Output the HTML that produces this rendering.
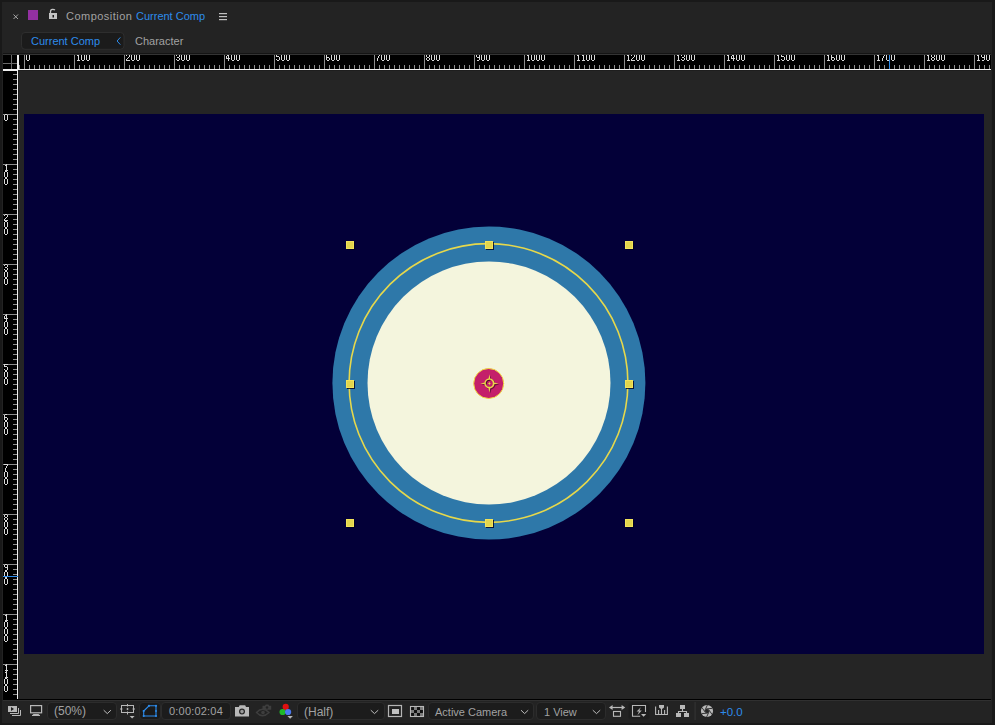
<!DOCTYPE html>
<html><head><meta charset="utf-8">
<style>
*{margin:0;padding:0;box-sizing:border-box}
html,body{width:995px;height:725px;overflow:hidden;background:#191919}
body{position:relative;font-family:"Liberation Sans",sans-serif}
.a{position:absolute}
.t{position:absolute;white-space:nowrap;font-size:11px;line-height:11px}
.g{color:#a2a2a2}
.b{color:#2d8ceb}
.dd{position:absolute;top:702px;height:18px;background:#1c1c1c;border:1px solid #2c2c2c;border-radius:4px}
svg{position:absolute;left:0;top:0;overflow:visible}
</style></head><body>
<div class="a" style="left:2px;top:2px;width:990px;height:721px;background:#232323"></div>
<!-- title row -->
<svg width="995" height="725" viewBox="0 0 995 725" shape-rendering="crispEdges">
  <!-- purple swatch -->
  <rect x="28" y="10" width="10" height="10" fill="#9330a2"/>
  <!-- tab box -->
  <rect x="21.5" y="32.5" width="102.5" height="16.8" rx="3.5" fill="#1b1b1b" stroke="#2e2e2e" stroke-width="1" shape-rendering="geometricPrecision"/>
  <!-- ruler top lines -->
  <rect x="3" y="53" width="988" height="1" fill="#141414"/>
  <rect x="3" y="54" width="988" height="1" fill="#343434"/>
  <!-- horizontal ruler bg -->
  <rect x="3" y="55" width="988" height="14" fill="#000"/>
  <!-- vertical ruler bg -->
  <rect x="3" y="69" width="14" height="630" fill="#000"/>
  <!-- viewer bg -->
  <rect x="18" y="70" width="973" height="629" fill="#252525"/>
  <rect x="18" y="70" width="973" height="1" fill="#1e1e1e"/>
  <rect x="18" y="70" width="1" height="629" fill="#1e1e1e"/>
  <!-- comp -->
  <rect x="24" y="114" width="960" height="540" fill="#030038"/>
  <!-- ticks -->
  <path fill="#8e8e8e" d="M19 65h1v4h-1zM24 55h1v14h-1zM29 65h1v4h-1zM34 65h1v4h-1zM39 65h1v4h-1zM44 65h1v4h-1zM49 65h1v4h-1zM54 65h1v4h-1zM59 65h1v4h-1zM64 65h1v4h-1zM69 65h1v4h-1zM74 55h1v14h-1zM79 65h1v4h-1zM84 65h1v4h-1zM89 65h1v4h-1zM94 65h1v4h-1zM99 65h1v4h-1zM104 65h1v4h-1zM109 65h1v4h-1zM114 65h1v4h-1zM119 65h1v4h-1zM124 55h1v14h-1zM129 65h1v4h-1zM134 65h1v4h-1zM139 65h1v4h-1zM144 65h1v4h-1zM149 65h1v4h-1zM154 65h1v4h-1zM159 65h1v4h-1zM164 65h1v4h-1zM169 65h1v4h-1zM174 55h1v14h-1zM179 65h1v4h-1zM184 65h1v4h-1zM189 65h1v4h-1zM194 65h1v4h-1zM199 65h1v4h-1zM204 65h1v4h-1zM209 65h1v4h-1zM214 65h1v4h-1zM219 65h1v4h-1zM224 55h1v14h-1zM229 65h1v4h-1zM234 65h1v4h-1zM239 65h1v4h-1zM244 65h1v4h-1zM249 65h1v4h-1zM254 65h1v4h-1zM259 65h1v4h-1zM264 65h1v4h-1zM269 65h1v4h-1zM274 55h1v14h-1zM279 65h1v4h-1zM284 65h1v4h-1zM289 65h1v4h-1zM294 65h1v4h-1zM299 65h1v4h-1zM304 65h1v4h-1zM309 65h1v4h-1zM314 65h1v4h-1zM319 65h1v4h-1zM324 55h1v14h-1zM329 65h1v4h-1zM334 65h1v4h-1zM339 65h1v4h-1zM344 65h1v4h-1zM349 65h1v4h-1zM354 65h1v4h-1zM359 65h1v4h-1zM364 65h1v4h-1zM369 65h1v4h-1zM374 55h1v14h-1zM379 65h1v4h-1zM384 65h1v4h-1zM389 65h1v4h-1zM394 65h1v4h-1zM399 65h1v4h-1zM404 65h1v4h-1zM409 65h1v4h-1zM414 65h1v4h-1zM419 65h1v4h-1zM424 55h1v14h-1zM429 65h1v4h-1zM434 65h1v4h-1zM439 65h1v4h-1zM444 65h1v4h-1zM449 65h1v4h-1zM454 65h1v4h-1zM459 65h1v4h-1zM464 65h1v4h-1zM469 65h1v4h-1zM474 55h1v14h-1zM479 65h1v4h-1zM484 65h1v4h-1zM489 65h1v4h-1zM494 65h1v4h-1zM499 65h1v4h-1zM504 65h1v4h-1zM509 65h1v4h-1zM514 65h1v4h-1zM519 65h1v4h-1zM524 55h1v14h-1zM529 65h1v4h-1zM534 65h1v4h-1zM539 65h1v4h-1zM544 65h1v4h-1zM549 65h1v4h-1zM554 65h1v4h-1zM559 65h1v4h-1zM564 65h1v4h-1zM569 65h1v4h-1zM574 55h1v14h-1zM579 65h1v4h-1zM584 65h1v4h-1zM589 65h1v4h-1zM594 65h1v4h-1zM599 65h1v4h-1zM604 65h1v4h-1zM609 65h1v4h-1zM614 65h1v4h-1zM619 65h1v4h-1zM624 55h1v14h-1zM629 65h1v4h-1zM634 65h1v4h-1zM639 65h1v4h-1zM644 65h1v4h-1zM649 65h1v4h-1zM654 65h1v4h-1zM659 65h1v4h-1zM664 65h1v4h-1zM669 65h1v4h-1zM674 55h1v14h-1zM679 65h1v4h-1zM684 65h1v4h-1zM689 65h1v4h-1zM694 65h1v4h-1zM699 65h1v4h-1zM704 65h1v4h-1zM709 65h1v4h-1zM714 65h1v4h-1zM719 65h1v4h-1zM724 55h1v14h-1zM729 65h1v4h-1zM734 65h1v4h-1zM739 65h1v4h-1zM744 65h1v4h-1zM749 65h1v4h-1zM754 65h1v4h-1zM759 65h1v4h-1zM764 65h1v4h-1zM769 65h1v4h-1zM774 55h1v14h-1zM779 65h1v4h-1zM784 65h1v4h-1zM789 65h1v4h-1zM794 65h1v4h-1zM799 65h1v4h-1zM804 65h1v4h-1zM809 65h1v4h-1zM814 65h1v4h-1zM819 65h1v4h-1zM824 55h1v14h-1zM829 65h1v4h-1zM834 65h1v4h-1zM839 65h1v4h-1zM844 65h1v4h-1zM849 65h1v4h-1zM854 65h1v4h-1zM859 65h1v4h-1zM864 65h1v4h-1zM869 65h1v4h-1zM874 55h1v14h-1zM879 65h1v4h-1zM884 65h1v4h-1zM889 65h1v4h-1zM894 65h1v4h-1zM899 65h1v4h-1zM904 65h1v4h-1zM909 65h1v4h-1zM914 65h1v4h-1zM919 65h1v4h-1zM924 55h1v14h-1zM929 65h1v4h-1zM934 65h1v4h-1zM939 65h1v4h-1zM944 65h1v4h-1zM949 65h1v4h-1zM954 65h1v4h-1zM959 65h1v4h-1zM964 65h1v4h-1zM969 65h1v4h-1zM974 55h1v14h-1zM979 65h1v4h-1zM984 65h1v4h-1zM989 65h1v4h-1z"/>
  <path fill="#8e8e8e" d="M13 74h4v1h-4zM13 79h4v1h-4zM13 84h4v1h-4zM13 89h4v1h-4zM13 94h4v1h-4zM13 99h4v1h-4zM13 104h4v1h-4zM13 109h4v1h-4zM3 114h14v1h-14zM13 119h4v1h-4zM13 124h4v1h-4zM13 129h4v1h-4zM13 134h4v1h-4zM13 139h4v1h-4zM13 144h4v1h-4zM13 149h4v1h-4zM13 154h4v1h-4zM13 159h4v1h-4zM3 164h14v1h-14zM13 169h4v1h-4zM13 174h4v1h-4zM13 179h4v1h-4zM13 184h4v1h-4zM13 189h4v1h-4zM13 194h4v1h-4zM13 199h4v1h-4zM13 204h4v1h-4zM13 209h4v1h-4zM3 214h14v1h-14zM13 219h4v1h-4zM13 224h4v1h-4zM13 229h4v1h-4zM13 234h4v1h-4zM13 239h4v1h-4zM13 244h4v1h-4zM13 249h4v1h-4zM13 254h4v1h-4zM13 259h4v1h-4zM3 264h14v1h-14zM13 269h4v1h-4zM13 274h4v1h-4zM13 279h4v1h-4zM13 284h4v1h-4zM13 289h4v1h-4zM13 294h4v1h-4zM13 299h4v1h-4zM13 304h4v1h-4zM13 309h4v1h-4zM3 314h14v1h-14zM13 319h4v1h-4zM13 324h4v1h-4zM13 329h4v1h-4zM13 334h4v1h-4zM13 339h4v1h-4zM13 344h4v1h-4zM13 349h4v1h-4zM13 354h4v1h-4zM13 359h4v1h-4zM3 364h14v1h-14zM13 369h4v1h-4zM13 374h4v1h-4zM13 379h4v1h-4zM13 384h4v1h-4zM13 389h4v1h-4zM13 394h4v1h-4zM13 399h4v1h-4zM13 404h4v1h-4zM13 409h4v1h-4zM3 414h14v1h-14zM13 419h4v1h-4zM13 424h4v1h-4zM13 429h4v1h-4zM13 434h4v1h-4zM13 439h4v1h-4zM13 444h4v1h-4zM13 449h4v1h-4zM13 454h4v1h-4zM13 459h4v1h-4zM3 464h14v1h-14zM13 469h4v1h-4zM13 474h4v1h-4zM13 479h4v1h-4zM13 484h4v1h-4zM13 489h4v1h-4zM13 494h4v1h-4zM13 499h4v1h-4zM13 504h4v1h-4zM13 509h4v1h-4zM3 514h14v1h-14zM13 519h4v1h-4zM13 524h4v1h-4zM13 529h4v1h-4zM13 534h4v1h-4zM13 539h4v1h-4zM13 544h4v1h-4zM13 549h4v1h-4zM13 554h4v1h-4zM13 559h4v1h-4zM3 564h14v1h-14zM13 569h4v1h-4zM13 574h4v1h-4zM13 579h4v1h-4zM13 584h4v1h-4zM13 589h4v1h-4zM13 594h4v1h-4zM13 599h4v1h-4zM13 604h4v1h-4zM13 609h4v1h-4zM3 614h14v1h-14zM13 619h4v1h-4zM13 624h4v1h-4zM13 629h4v1h-4zM13 634h4v1h-4zM13 639h4v1h-4zM13 644h4v1h-4zM13 649h4v1h-4zM13 654h4v1h-4zM13 659h4v1h-4zM3 664h14v1h-14zM13 669h4v1h-4zM13 674h4v1h-4zM13 679h4v1h-4zM13 684h4v1h-4zM13 689h4v1h-4zM13 694h4v1h-4z"/>
  <path fill="#d8d8d8" d="M26 55h1v1h-1zM29 55h1v1h-1zM26 56h1v1h-1zM29 56h1v1h-1zM26 57h1v1h-1zM29 57h1v1h-1zM26 58h1v1h-1zM29 58h1v1h-1zM26 59h1v1h-1zM29 59h1v1h-1zM27 60h1v1h-1zM28 60h1v1h-1zM77 55h1v1h-1zM78 55h1v1h-1zM78 56h1v1h-1zM78 57h1v1h-1zM78 58h1v1h-1zM78 59h1v1h-1zM77 60h1v1h-1zM78 60h1v1h-1zM79 60h1v1h-1zM81 55h1v1h-1zM84 55h1v1h-1zM81 56h1v1h-1zM84 56h1v1h-1zM81 57h1v1h-1zM84 57h1v1h-1zM81 58h1v1h-1zM84 58h1v1h-1zM81 59h1v1h-1zM84 59h1v1h-1zM82 60h1v1h-1zM83 60h1v1h-1zM86 55h1v1h-1zM89 55h1v1h-1zM86 56h1v1h-1zM89 56h1v1h-1zM86 57h1v1h-1zM89 57h1v1h-1zM86 58h1v1h-1zM89 58h1v1h-1zM86 59h1v1h-1zM89 59h1v1h-1zM87 60h1v1h-1zM88 60h1v1h-1zM126 55h1v1h-1zM129 55h1v1h-1zM129 56h1v1h-1zM128 57h1v1h-1zM127 58h1v1h-1zM126 59h1v1h-1zM126 60h1v1h-1zM127 60h1v1h-1zM128 60h1v1h-1zM129 60h1v1h-1zM131 55h1v1h-1zM134 55h1v1h-1zM131 56h1v1h-1zM134 56h1v1h-1zM131 57h1v1h-1zM134 57h1v1h-1zM131 58h1v1h-1zM134 58h1v1h-1zM131 59h1v1h-1zM134 59h1v1h-1zM132 60h1v1h-1zM133 60h1v1h-1zM136 55h1v1h-1zM139 55h1v1h-1zM136 56h1v1h-1zM139 56h1v1h-1zM136 57h1v1h-1zM139 57h1v1h-1zM136 58h1v1h-1zM139 58h1v1h-1zM136 59h1v1h-1zM139 59h1v1h-1zM137 60h1v1h-1zM138 60h1v1h-1zM176 55h1v1h-1zM179 55h1v1h-1zM179 56h1v1h-1zM177 57h1v1h-1zM178 57h1v1h-1zM179 58h1v1h-1zM176 59h1v1h-1zM179 59h1v1h-1zM177 60h1v1h-1zM178 60h1v1h-1zM181 55h1v1h-1zM184 55h1v1h-1zM181 56h1v1h-1zM184 56h1v1h-1zM181 57h1v1h-1zM184 57h1v1h-1zM181 58h1v1h-1zM184 58h1v1h-1zM181 59h1v1h-1zM184 59h1v1h-1zM182 60h1v1h-1zM183 60h1v1h-1zM186 55h1v1h-1zM189 55h1v1h-1zM186 56h1v1h-1zM189 56h1v1h-1zM186 57h1v1h-1zM189 57h1v1h-1zM186 58h1v1h-1zM189 58h1v1h-1zM186 59h1v1h-1zM189 59h1v1h-1zM187 60h1v1h-1zM188 60h1v1h-1zM227 55h1v1h-1zM228 55h1v1h-1zM226 56h1v1h-1zM228 56h1v1h-1zM226 57h1v1h-1zM228 57h1v1h-1zM226 58h1v1h-1zM227 58h1v1h-1zM228 58h1v1h-1zM229 58h1v1h-1zM228 59h1v1h-1zM228 60h1v1h-1zM231 55h1v1h-1zM234 55h1v1h-1zM231 56h1v1h-1zM234 56h1v1h-1zM231 57h1v1h-1zM234 57h1v1h-1zM231 58h1v1h-1zM234 58h1v1h-1zM231 59h1v1h-1zM234 59h1v1h-1zM232 60h1v1h-1zM233 60h1v1h-1zM236 55h1v1h-1zM239 55h1v1h-1zM236 56h1v1h-1zM239 56h1v1h-1zM236 57h1v1h-1zM239 57h1v1h-1zM236 58h1v1h-1zM239 58h1v1h-1zM236 59h1v1h-1zM239 59h1v1h-1zM237 60h1v1h-1zM238 60h1v1h-1zM276 55h1v1h-1zM276 56h1v1h-1zM277 56h1v1h-1zM278 56h1v1h-1zM279 57h1v1h-1zM279 58h1v1h-1zM276 59h1v1h-1zM279 59h1v1h-1zM277 60h1v1h-1zM278 60h1v1h-1zM281 55h1v1h-1zM284 55h1v1h-1zM281 56h1v1h-1zM284 56h1v1h-1zM281 57h1v1h-1zM284 57h1v1h-1zM281 58h1v1h-1zM284 58h1v1h-1zM281 59h1v1h-1zM284 59h1v1h-1zM282 60h1v1h-1zM283 60h1v1h-1zM286 55h1v1h-1zM289 55h1v1h-1zM286 56h1v1h-1zM289 56h1v1h-1zM286 57h1v1h-1zM289 57h1v1h-1zM286 58h1v1h-1zM289 58h1v1h-1zM286 59h1v1h-1zM289 59h1v1h-1zM287 60h1v1h-1zM288 60h1v1h-1zM326 55h1v1h-1zM326 56h1v1h-1zM326 57h1v1h-1zM327 57h1v1h-1zM328 57h1v1h-1zM326 58h1v1h-1zM329 58h1v1h-1zM326 59h1v1h-1zM329 59h1v1h-1zM327 60h1v1h-1zM328 60h1v1h-1zM331 55h1v1h-1zM334 55h1v1h-1zM331 56h1v1h-1zM334 56h1v1h-1zM331 57h1v1h-1zM334 57h1v1h-1zM331 58h1v1h-1zM334 58h1v1h-1zM331 59h1v1h-1zM334 59h1v1h-1zM332 60h1v1h-1zM333 60h1v1h-1zM336 55h1v1h-1zM339 55h1v1h-1zM336 56h1v1h-1zM339 56h1v1h-1zM336 57h1v1h-1zM339 57h1v1h-1zM336 58h1v1h-1zM339 58h1v1h-1zM336 59h1v1h-1zM339 59h1v1h-1zM337 60h1v1h-1zM338 60h1v1h-1zM379 55h1v1h-1zM378 56h1v1h-1zM378 57h1v1h-1zM377 58h1v1h-1zM377 59h1v1h-1zM377 60h1v1h-1zM381 55h1v1h-1zM384 55h1v1h-1zM381 56h1v1h-1zM384 56h1v1h-1zM381 57h1v1h-1zM384 57h1v1h-1zM381 58h1v1h-1zM384 58h1v1h-1zM381 59h1v1h-1zM384 59h1v1h-1zM382 60h1v1h-1zM383 60h1v1h-1zM386 55h1v1h-1zM389 55h1v1h-1zM386 56h1v1h-1zM389 56h1v1h-1zM386 57h1v1h-1zM389 57h1v1h-1zM386 58h1v1h-1zM389 58h1v1h-1zM386 59h1v1h-1zM389 59h1v1h-1zM387 60h1v1h-1zM388 60h1v1h-1zM426 55h1v1h-1zM429 55h1v1h-1zM426 56h1v1h-1zM429 56h1v1h-1zM427 57h1v1h-1zM428 57h1v1h-1zM426 58h1v1h-1zM429 58h1v1h-1zM426 59h1v1h-1zM429 59h1v1h-1zM427 60h1v1h-1zM428 60h1v1h-1zM431 55h1v1h-1zM434 55h1v1h-1zM431 56h1v1h-1zM434 56h1v1h-1zM431 57h1v1h-1zM434 57h1v1h-1zM431 58h1v1h-1zM434 58h1v1h-1zM431 59h1v1h-1zM434 59h1v1h-1zM432 60h1v1h-1zM433 60h1v1h-1zM436 55h1v1h-1zM439 55h1v1h-1zM436 56h1v1h-1zM439 56h1v1h-1zM436 57h1v1h-1zM439 57h1v1h-1zM436 58h1v1h-1zM439 58h1v1h-1zM436 59h1v1h-1zM439 59h1v1h-1zM437 60h1v1h-1zM438 60h1v1h-1zM476 55h1v1h-1zM479 55h1v1h-1zM476 56h1v1h-1zM479 56h1v1h-1zM477 57h1v1h-1zM478 57h1v1h-1zM479 57h1v1h-1zM479 58h1v1h-1zM479 59h1v1h-1zM477 60h1v1h-1zM478 60h1v1h-1zM481 55h1v1h-1zM484 55h1v1h-1zM481 56h1v1h-1zM484 56h1v1h-1zM481 57h1v1h-1zM484 57h1v1h-1zM481 58h1v1h-1zM484 58h1v1h-1zM481 59h1v1h-1zM484 59h1v1h-1zM482 60h1v1h-1zM483 60h1v1h-1zM486 55h1v1h-1zM489 55h1v1h-1zM486 56h1v1h-1zM489 56h1v1h-1zM486 57h1v1h-1zM489 57h1v1h-1zM486 58h1v1h-1zM489 58h1v1h-1zM486 59h1v1h-1zM489 59h1v1h-1zM487 60h1v1h-1zM488 60h1v1h-1zM527 55h1v1h-1zM528 55h1v1h-1zM528 56h1v1h-1zM528 57h1v1h-1zM528 58h1v1h-1zM528 59h1v1h-1zM527 60h1v1h-1zM528 60h1v1h-1zM529 60h1v1h-1zM531 55h1v1h-1zM534 55h1v1h-1zM531 56h1v1h-1zM534 56h1v1h-1zM531 57h1v1h-1zM534 57h1v1h-1zM531 58h1v1h-1zM534 58h1v1h-1zM531 59h1v1h-1zM534 59h1v1h-1zM532 60h1v1h-1zM533 60h1v1h-1zM536 55h1v1h-1zM539 55h1v1h-1zM536 56h1v1h-1zM539 56h1v1h-1zM536 57h1v1h-1zM539 57h1v1h-1zM536 58h1v1h-1zM539 58h1v1h-1zM536 59h1v1h-1zM539 59h1v1h-1zM537 60h1v1h-1zM538 60h1v1h-1zM541 55h1v1h-1zM544 55h1v1h-1zM541 56h1v1h-1zM544 56h1v1h-1zM541 57h1v1h-1zM544 57h1v1h-1zM541 58h1v1h-1zM544 58h1v1h-1zM541 59h1v1h-1zM544 59h1v1h-1zM542 60h1v1h-1zM543 60h1v1h-1zM577 55h1v1h-1zM578 55h1v1h-1zM578 56h1v1h-1zM578 57h1v1h-1zM578 58h1v1h-1zM578 59h1v1h-1zM577 60h1v1h-1zM578 60h1v1h-1zM579 60h1v1h-1zM582 55h1v1h-1zM583 55h1v1h-1zM583 56h1v1h-1zM583 57h1v1h-1zM583 58h1v1h-1zM583 59h1v1h-1zM582 60h1v1h-1zM583 60h1v1h-1zM584 60h1v1h-1zM586 55h1v1h-1zM589 55h1v1h-1zM586 56h1v1h-1zM589 56h1v1h-1zM586 57h1v1h-1zM589 57h1v1h-1zM586 58h1v1h-1zM589 58h1v1h-1zM586 59h1v1h-1zM589 59h1v1h-1zM587 60h1v1h-1zM588 60h1v1h-1zM591 55h1v1h-1zM594 55h1v1h-1zM591 56h1v1h-1zM594 56h1v1h-1zM591 57h1v1h-1zM594 57h1v1h-1zM591 58h1v1h-1zM594 58h1v1h-1zM591 59h1v1h-1zM594 59h1v1h-1zM592 60h1v1h-1zM593 60h1v1h-1zM627 55h1v1h-1zM628 55h1v1h-1zM628 56h1v1h-1zM628 57h1v1h-1zM628 58h1v1h-1zM628 59h1v1h-1zM627 60h1v1h-1zM628 60h1v1h-1zM629 60h1v1h-1zM631 55h1v1h-1zM634 55h1v1h-1zM634 56h1v1h-1zM633 57h1v1h-1zM632 58h1v1h-1zM631 59h1v1h-1zM631 60h1v1h-1zM632 60h1v1h-1zM633 60h1v1h-1zM634 60h1v1h-1zM636 55h1v1h-1zM639 55h1v1h-1zM636 56h1v1h-1zM639 56h1v1h-1zM636 57h1v1h-1zM639 57h1v1h-1zM636 58h1v1h-1zM639 58h1v1h-1zM636 59h1v1h-1zM639 59h1v1h-1zM637 60h1v1h-1zM638 60h1v1h-1zM641 55h1v1h-1zM644 55h1v1h-1zM641 56h1v1h-1zM644 56h1v1h-1zM641 57h1v1h-1zM644 57h1v1h-1zM641 58h1v1h-1zM644 58h1v1h-1zM641 59h1v1h-1zM644 59h1v1h-1zM642 60h1v1h-1zM643 60h1v1h-1zM677 55h1v1h-1zM678 55h1v1h-1zM678 56h1v1h-1zM678 57h1v1h-1zM678 58h1v1h-1zM678 59h1v1h-1zM677 60h1v1h-1zM678 60h1v1h-1zM679 60h1v1h-1zM681 55h1v1h-1zM684 55h1v1h-1zM684 56h1v1h-1zM682 57h1v1h-1zM683 57h1v1h-1zM684 58h1v1h-1zM681 59h1v1h-1zM684 59h1v1h-1zM682 60h1v1h-1zM683 60h1v1h-1zM686 55h1v1h-1zM689 55h1v1h-1zM686 56h1v1h-1zM689 56h1v1h-1zM686 57h1v1h-1zM689 57h1v1h-1zM686 58h1v1h-1zM689 58h1v1h-1zM686 59h1v1h-1zM689 59h1v1h-1zM687 60h1v1h-1zM688 60h1v1h-1zM691 55h1v1h-1zM694 55h1v1h-1zM691 56h1v1h-1zM694 56h1v1h-1zM691 57h1v1h-1zM694 57h1v1h-1zM691 58h1v1h-1zM694 58h1v1h-1zM691 59h1v1h-1zM694 59h1v1h-1zM692 60h1v1h-1zM693 60h1v1h-1zM727 55h1v1h-1zM728 55h1v1h-1zM728 56h1v1h-1zM728 57h1v1h-1zM728 58h1v1h-1zM728 59h1v1h-1zM727 60h1v1h-1zM728 60h1v1h-1zM729 60h1v1h-1zM732 55h1v1h-1zM733 55h1v1h-1zM731 56h1v1h-1zM733 56h1v1h-1zM731 57h1v1h-1zM733 57h1v1h-1zM731 58h1v1h-1zM732 58h1v1h-1zM733 58h1v1h-1zM734 58h1v1h-1zM733 59h1v1h-1zM733 60h1v1h-1zM736 55h1v1h-1zM739 55h1v1h-1zM736 56h1v1h-1zM739 56h1v1h-1zM736 57h1v1h-1zM739 57h1v1h-1zM736 58h1v1h-1zM739 58h1v1h-1zM736 59h1v1h-1zM739 59h1v1h-1zM737 60h1v1h-1zM738 60h1v1h-1zM741 55h1v1h-1zM744 55h1v1h-1zM741 56h1v1h-1zM744 56h1v1h-1zM741 57h1v1h-1zM744 57h1v1h-1zM741 58h1v1h-1zM744 58h1v1h-1zM741 59h1v1h-1zM744 59h1v1h-1zM742 60h1v1h-1zM743 60h1v1h-1zM777 55h1v1h-1zM778 55h1v1h-1zM778 56h1v1h-1zM778 57h1v1h-1zM778 58h1v1h-1zM778 59h1v1h-1zM777 60h1v1h-1zM778 60h1v1h-1zM779 60h1v1h-1zM781 55h1v1h-1zM781 56h1v1h-1zM782 56h1v1h-1zM783 56h1v1h-1zM784 57h1v1h-1zM784 58h1v1h-1zM781 59h1v1h-1zM784 59h1v1h-1zM782 60h1v1h-1zM783 60h1v1h-1zM786 55h1v1h-1zM789 55h1v1h-1zM786 56h1v1h-1zM789 56h1v1h-1zM786 57h1v1h-1zM789 57h1v1h-1zM786 58h1v1h-1zM789 58h1v1h-1zM786 59h1v1h-1zM789 59h1v1h-1zM787 60h1v1h-1zM788 60h1v1h-1zM791 55h1v1h-1zM794 55h1v1h-1zM791 56h1v1h-1zM794 56h1v1h-1zM791 57h1v1h-1zM794 57h1v1h-1zM791 58h1v1h-1zM794 58h1v1h-1zM791 59h1v1h-1zM794 59h1v1h-1zM792 60h1v1h-1zM793 60h1v1h-1zM827 55h1v1h-1zM828 55h1v1h-1zM828 56h1v1h-1zM828 57h1v1h-1zM828 58h1v1h-1zM828 59h1v1h-1zM827 60h1v1h-1zM828 60h1v1h-1zM829 60h1v1h-1zM831 55h1v1h-1zM831 56h1v1h-1zM831 57h1v1h-1zM832 57h1v1h-1zM833 57h1v1h-1zM831 58h1v1h-1zM834 58h1v1h-1zM831 59h1v1h-1zM834 59h1v1h-1zM832 60h1v1h-1zM833 60h1v1h-1zM836 55h1v1h-1zM839 55h1v1h-1zM836 56h1v1h-1zM839 56h1v1h-1zM836 57h1v1h-1zM839 57h1v1h-1zM836 58h1v1h-1zM839 58h1v1h-1zM836 59h1v1h-1zM839 59h1v1h-1zM837 60h1v1h-1zM838 60h1v1h-1zM841 55h1v1h-1zM844 55h1v1h-1zM841 56h1v1h-1zM844 56h1v1h-1zM841 57h1v1h-1zM844 57h1v1h-1zM841 58h1v1h-1zM844 58h1v1h-1zM841 59h1v1h-1zM844 59h1v1h-1zM842 60h1v1h-1zM843 60h1v1h-1zM877 55h1v1h-1zM878 55h1v1h-1zM878 56h1v1h-1zM878 57h1v1h-1zM878 58h1v1h-1zM878 59h1v1h-1zM877 60h1v1h-1zM878 60h1v1h-1zM879 60h1v1h-1zM884 55h1v1h-1zM883 56h1v1h-1zM883 57h1v1h-1zM882 58h1v1h-1zM882 59h1v1h-1zM882 60h1v1h-1zM886 55h1v1h-1zM889 55h1v1h-1zM886 56h1v1h-1zM889 56h1v1h-1zM886 57h1v1h-1zM889 57h1v1h-1zM886 58h1v1h-1zM889 58h1v1h-1zM886 59h1v1h-1zM889 59h1v1h-1zM887 60h1v1h-1zM888 60h1v1h-1zM891 55h1v1h-1zM894 55h1v1h-1zM891 56h1v1h-1zM894 56h1v1h-1zM891 57h1v1h-1zM894 57h1v1h-1zM891 58h1v1h-1zM894 58h1v1h-1zM891 59h1v1h-1zM894 59h1v1h-1zM892 60h1v1h-1zM893 60h1v1h-1zM927 55h1v1h-1zM928 55h1v1h-1zM928 56h1v1h-1zM928 57h1v1h-1zM928 58h1v1h-1zM928 59h1v1h-1zM927 60h1v1h-1zM928 60h1v1h-1zM929 60h1v1h-1zM931 55h1v1h-1zM934 55h1v1h-1zM931 56h1v1h-1zM934 56h1v1h-1zM932 57h1v1h-1zM933 57h1v1h-1zM931 58h1v1h-1zM934 58h1v1h-1zM931 59h1v1h-1zM934 59h1v1h-1zM932 60h1v1h-1zM933 60h1v1h-1zM936 55h1v1h-1zM939 55h1v1h-1zM936 56h1v1h-1zM939 56h1v1h-1zM936 57h1v1h-1zM939 57h1v1h-1zM936 58h1v1h-1zM939 58h1v1h-1zM936 59h1v1h-1zM939 59h1v1h-1zM937 60h1v1h-1zM938 60h1v1h-1zM941 55h1v1h-1zM944 55h1v1h-1zM941 56h1v1h-1zM944 56h1v1h-1zM941 57h1v1h-1zM944 57h1v1h-1zM941 58h1v1h-1zM944 58h1v1h-1zM941 59h1v1h-1zM944 59h1v1h-1zM942 60h1v1h-1zM943 60h1v1h-1zM977 55h1v1h-1zM978 55h1v1h-1zM978 56h1v1h-1zM978 57h1v1h-1zM978 58h1v1h-1zM978 59h1v1h-1zM977 60h1v1h-1zM978 60h1v1h-1zM979 60h1v1h-1zM981 55h1v1h-1zM984 55h1v1h-1zM981 56h1v1h-1zM984 56h1v1h-1zM982 57h1v1h-1zM983 57h1v1h-1zM984 57h1v1h-1zM984 58h1v1h-1zM984 59h1v1h-1zM982 60h1v1h-1zM983 60h1v1h-1zM986 55h1v1h-1zM989 55h1v1h-1zM986 56h1v1h-1zM989 56h1v1h-1zM986 57h1v1h-1zM989 57h1v1h-1zM986 58h1v1h-1zM989 58h1v1h-1zM986 59h1v1h-1zM989 59h1v1h-1zM987 60h1v1h-1zM988 60h1v1h-1z"/>
  <path fill="#d8d8d8" d="M5 114h1v1h-1zM6 114h1v1h-1zM4 115h1v1h-1zM7 115h1v1h-1zM4 116h1v1h-1zM7 116h1v1h-1zM4 117h1v1h-1zM7 117h1v1h-1zM4 118h1v1h-1zM7 118h1v1h-1zM4 119h1v1h-1zM7 119h1v1h-1zM5 120h1v1h-1zM6 120h1v1h-1zM6 164h1v1h-1zM5 165h1v1h-1zM6 165h1v1h-1zM6 166h1v1h-1zM6 167h1v1h-1zM6 168h1v1h-1zM6 169h1v1h-1zM5 170h1v1h-1zM6 170h1v1h-1zM7 170h1v1h-1zM5 171h1v1h-1zM6 171h1v1h-1zM4 172h1v1h-1zM7 172h1v1h-1zM4 173h1v1h-1zM7 173h1v1h-1zM4 174h1v1h-1zM7 174h1v1h-1zM4 175h1v1h-1zM7 175h1v1h-1zM4 176h1v1h-1zM7 176h1v1h-1zM5 177h1v1h-1zM6 177h1v1h-1zM5 178h1v1h-1zM6 178h1v1h-1zM4 179h1v1h-1zM7 179h1v1h-1zM4 180h1v1h-1zM7 180h1v1h-1zM4 181h1v1h-1zM7 181h1v1h-1zM4 182h1v1h-1zM7 182h1v1h-1zM4 183h1v1h-1zM7 183h1v1h-1zM5 184h1v1h-1zM6 184h1v1h-1zM5 214h1v1h-1zM6 214h1v1h-1zM4 215h1v1h-1zM7 215h1v1h-1zM7 216h1v1h-1zM6 217h1v1h-1zM5 218h1v1h-1zM4 219h1v1h-1zM4 220h1v1h-1zM5 220h1v1h-1zM6 220h1v1h-1zM7 220h1v1h-1zM5 221h1v1h-1zM6 221h1v1h-1zM4 222h1v1h-1zM7 222h1v1h-1zM4 223h1v1h-1zM7 223h1v1h-1zM4 224h1v1h-1zM7 224h1v1h-1zM4 225h1v1h-1zM7 225h1v1h-1zM4 226h1v1h-1zM7 226h1v1h-1zM5 227h1v1h-1zM6 227h1v1h-1zM5 228h1v1h-1zM6 228h1v1h-1zM4 229h1v1h-1zM7 229h1v1h-1zM4 230h1v1h-1zM7 230h1v1h-1zM4 231h1v1h-1zM7 231h1v1h-1zM4 232h1v1h-1zM7 232h1v1h-1zM4 233h1v1h-1zM7 233h1v1h-1zM5 234h1v1h-1zM6 234h1v1h-1zM5 264h1v1h-1zM6 264h1v1h-1zM4 265h1v1h-1zM7 265h1v1h-1zM7 266h1v1h-1zM5 267h1v1h-1zM6 267h1v1h-1zM7 268h1v1h-1zM4 269h1v1h-1zM7 269h1v1h-1zM5 270h1v1h-1zM6 270h1v1h-1zM5 271h1v1h-1zM6 271h1v1h-1zM4 272h1v1h-1zM7 272h1v1h-1zM4 273h1v1h-1zM7 273h1v1h-1zM4 274h1v1h-1zM7 274h1v1h-1zM4 275h1v1h-1zM7 275h1v1h-1zM4 276h1v1h-1zM7 276h1v1h-1zM5 277h1v1h-1zM6 277h1v1h-1zM5 278h1v1h-1zM6 278h1v1h-1zM4 279h1v1h-1zM7 279h1v1h-1zM4 280h1v1h-1zM7 280h1v1h-1zM4 281h1v1h-1zM7 281h1v1h-1zM4 282h1v1h-1zM7 282h1v1h-1zM4 283h1v1h-1zM7 283h1v1h-1zM5 284h1v1h-1zM6 284h1v1h-1zM6 314h1v1h-1zM5 315h1v1h-1zM6 315h1v1h-1zM4 316h1v1h-1zM6 316h1v1h-1zM4 317h1v1h-1zM6 317h1v1h-1zM4 318h1v1h-1zM5 318h1v1h-1zM6 318h1v1h-1zM7 318h1v1h-1zM6 319h1v1h-1zM6 320h1v1h-1zM5 321h1v1h-1zM6 321h1v1h-1zM4 322h1v1h-1zM7 322h1v1h-1zM4 323h1v1h-1zM7 323h1v1h-1zM4 324h1v1h-1zM7 324h1v1h-1zM4 325h1v1h-1zM7 325h1v1h-1zM4 326h1v1h-1zM7 326h1v1h-1zM5 327h1v1h-1zM6 327h1v1h-1zM5 328h1v1h-1zM6 328h1v1h-1zM4 329h1v1h-1zM7 329h1v1h-1zM4 330h1v1h-1zM7 330h1v1h-1zM4 331h1v1h-1zM7 331h1v1h-1zM4 332h1v1h-1zM7 332h1v1h-1zM4 333h1v1h-1zM7 333h1v1h-1zM5 334h1v1h-1zM6 334h1v1h-1zM4 364h1v1h-1zM5 364h1v1h-1zM6 364h1v1h-1zM7 364h1v1h-1zM4 365h1v1h-1zM4 366h1v1h-1zM5 366h1v1h-1zM6 366h1v1h-1zM7 367h1v1h-1zM7 368h1v1h-1zM4 369h1v1h-1zM7 369h1v1h-1zM5 370h1v1h-1zM6 370h1v1h-1zM5 371h1v1h-1zM6 371h1v1h-1zM4 372h1v1h-1zM7 372h1v1h-1zM4 373h1v1h-1zM7 373h1v1h-1zM4 374h1v1h-1zM7 374h1v1h-1zM4 375h1v1h-1zM7 375h1v1h-1zM4 376h1v1h-1zM7 376h1v1h-1zM5 377h1v1h-1zM6 377h1v1h-1zM5 378h1v1h-1zM6 378h1v1h-1zM4 379h1v1h-1zM7 379h1v1h-1zM4 380h1v1h-1zM7 380h1v1h-1zM4 381h1v1h-1zM7 381h1v1h-1zM4 382h1v1h-1zM7 382h1v1h-1zM4 383h1v1h-1zM7 383h1v1h-1zM5 384h1v1h-1zM6 384h1v1h-1zM5 414h1v1h-1zM6 414h1v1h-1zM4 415h1v1h-1zM4 416h1v1h-1zM4 417h1v1h-1zM5 417h1v1h-1zM6 417h1v1h-1zM4 418h1v1h-1zM7 418h1v1h-1zM4 419h1v1h-1zM7 419h1v1h-1zM5 420h1v1h-1zM6 420h1v1h-1zM5 421h1v1h-1zM6 421h1v1h-1zM4 422h1v1h-1zM7 422h1v1h-1zM4 423h1v1h-1zM7 423h1v1h-1zM4 424h1v1h-1zM7 424h1v1h-1zM4 425h1v1h-1zM7 425h1v1h-1zM4 426h1v1h-1zM7 426h1v1h-1zM5 427h1v1h-1zM6 427h1v1h-1zM5 428h1v1h-1zM6 428h1v1h-1zM4 429h1v1h-1zM7 429h1v1h-1zM4 430h1v1h-1zM7 430h1v1h-1zM4 431h1v1h-1zM7 431h1v1h-1zM4 432h1v1h-1zM7 432h1v1h-1zM4 433h1v1h-1zM7 433h1v1h-1zM5 434h1v1h-1zM6 434h1v1h-1zM4 464h1v1h-1zM5 464h1v1h-1zM6 464h1v1h-1zM7 464h1v1h-1zM7 465h1v1h-1zM6 466h1v1h-1zM6 467h1v1h-1zM5 468h1v1h-1zM5 469h1v1h-1zM5 470h1v1h-1zM5 471h1v1h-1zM6 471h1v1h-1zM4 472h1v1h-1zM7 472h1v1h-1zM4 473h1v1h-1zM7 473h1v1h-1zM4 474h1v1h-1zM7 474h1v1h-1zM4 475h1v1h-1zM7 475h1v1h-1zM4 476h1v1h-1zM7 476h1v1h-1zM5 477h1v1h-1zM6 477h1v1h-1zM5 478h1v1h-1zM6 478h1v1h-1zM4 479h1v1h-1zM7 479h1v1h-1zM4 480h1v1h-1zM7 480h1v1h-1zM4 481h1v1h-1zM7 481h1v1h-1zM4 482h1v1h-1zM7 482h1v1h-1zM4 483h1v1h-1zM7 483h1v1h-1zM5 484h1v1h-1zM6 484h1v1h-1zM5 514h1v1h-1zM6 514h1v1h-1zM4 515h1v1h-1zM7 515h1v1h-1zM4 516h1v1h-1zM7 516h1v1h-1zM5 517h1v1h-1zM6 517h1v1h-1zM4 518h1v1h-1zM7 518h1v1h-1zM4 519h1v1h-1zM7 519h1v1h-1zM5 520h1v1h-1zM6 520h1v1h-1zM5 521h1v1h-1zM6 521h1v1h-1zM4 522h1v1h-1zM7 522h1v1h-1zM4 523h1v1h-1zM7 523h1v1h-1zM4 524h1v1h-1zM7 524h1v1h-1zM4 525h1v1h-1zM7 525h1v1h-1zM4 526h1v1h-1zM7 526h1v1h-1zM5 527h1v1h-1zM6 527h1v1h-1zM5 528h1v1h-1zM6 528h1v1h-1zM4 529h1v1h-1zM7 529h1v1h-1zM4 530h1v1h-1zM7 530h1v1h-1zM4 531h1v1h-1zM7 531h1v1h-1zM4 532h1v1h-1zM7 532h1v1h-1zM4 533h1v1h-1zM7 533h1v1h-1zM5 534h1v1h-1zM6 534h1v1h-1zM5 564h1v1h-1zM6 564h1v1h-1zM4 565h1v1h-1zM7 565h1v1h-1zM4 566h1v1h-1zM7 566h1v1h-1zM5 567h1v1h-1zM6 567h1v1h-1zM7 567h1v1h-1zM7 568h1v1h-1zM7 569h1v1h-1zM5 570h1v1h-1zM6 570h1v1h-1zM5 571h1v1h-1zM6 571h1v1h-1zM4 572h1v1h-1zM7 572h1v1h-1zM4 573h1v1h-1zM7 573h1v1h-1zM4 574h1v1h-1zM7 574h1v1h-1zM4 575h1v1h-1zM7 575h1v1h-1zM4 576h1v1h-1zM7 576h1v1h-1zM5 577h1v1h-1zM6 577h1v1h-1zM5 578h1v1h-1zM6 578h1v1h-1zM4 579h1v1h-1zM7 579h1v1h-1zM4 580h1v1h-1zM7 580h1v1h-1zM4 581h1v1h-1zM7 581h1v1h-1zM4 582h1v1h-1zM7 582h1v1h-1zM4 583h1v1h-1zM7 583h1v1h-1zM5 584h1v1h-1zM6 584h1v1h-1zM6 614h1v1h-1zM5 615h1v1h-1zM6 615h1v1h-1zM6 616h1v1h-1zM6 617h1v1h-1zM6 618h1v1h-1zM6 619h1v1h-1zM5 620h1v1h-1zM6 620h1v1h-1zM7 620h1v1h-1zM5 621h1v1h-1zM6 621h1v1h-1zM4 622h1v1h-1zM7 622h1v1h-1zM4 623h1v1h-1zM7 623h1v1h-1zM4 624h1v1h-1zM7 624h1v1h-1zM4 625h1v1h-1zM7 625h1v1h-1zM4 626h1v1h-1zM7 626h1v1h-1zM5 627h1v1h-1zM6 627h1v1h-1zM5 628h1v1h-1zM6 628h1v1h-1zM4 629h1v1h-1zM7 629h1v1h-1zM4 630h1v1h-1zM7 630h1v1h-1zM4 631h1v1h-1zM7 631h1v1h-1zM4 632h1v1h-1zM7 632h1v1h-1zM4 633h1v1h-1zM7 633h1v1h-1zM5 634h1v1h-1zM6 634h1v1h-1zM5 635h1v1h-1zM6 635h1v1h-1zM4 636h1v1h-1zM7 636h1v1h-1zM4 637h1v1h-1zM7 637h1v1h-1zM4 638h1v1h-1zM7 638h1v1h-1zM4 639h1v1h-1zM7 639h1v1h-1zM4 640h1v1h-1zM7 640h1v1h-1zM5 641h1v1h-1zM6 641h1v1h-1zM6 664h1v1h-1zM5 665h1v1h-1zM6 665h1v1h-1zM6 666h1v1h-1zM6 667h1v1h-1zM6 668h1v1h-1zM6 669h1v1h-1zM5 670h1v1h-1zM6 670h1v1h-1zM7 670h1v1h-1zM6 671h1v1h-1zM5 672h1v1h-1zM6 672h1v1h-1zM6 673h1v1h-1zM6 674h1v1h-1zM6 675h1v1h-1zM6 676h1v1h-1zM5 677h1v1h-1zM6 677h1v1h-1zM7 677h1v1h-1zM5 678h1v1h-1zM6 678h1v1h-1zM4 679h1v1h-1zM7 679h1v1h-1zM4 680h1v1h-1zM7 680h1v1h-1zM4 681h1v1h-1zM7 681h1v1h-1zM4 682h1v1h-1zM7 682h1v1h-1zM4 683h1v1h-1zM7 683h1v1h-1zM5 684h1v1h-1zM6 684h1v1h-1zM5 685h1v1h-1zM6 685h1v1h-1zM4 686h1v1h-1zM7 686h1v1h-1zM4 687h1v1h-1zM7 687h1v1h-1zM4 688h1v1h-1zM7 688h1v1h-1zM4 689h1v1h-1zM7 689h1v1h-1zM4 690h1v1h-1zM7 690h1v1h-1zM5 691h1v1h-1zM6 691h1v1h-1z"/>
  <!-- corner crosshair -->
  <rect x="3" y="63" width="14" height="1" fill="#6a6a6a"/>
  <rect x="11" y="55" width="1" height="14" fill="#6a6a6a"/>
  <!-- white lines -->
  <rect x="18" y="69" width="973" height="1" fill="#f0f0f0"/>
  <rect x="3" y="69" width="15" height="2" fill="#f0f0f0"/>
  <rect x="17" y="55" width="2" height="15" fill="#f0f0f0"/>
  <rect x="17" y="70" width="1" height="629" fill="#f0f0f0"/>
  <!-- cursor indicators -->
  <rect x="889" y="55" width="1" height="14" fill="#2d8ceb"/>
  <rect x="3" y="576" width="15" height="1" fill="#2d8ceb"/>
  <!-- bottom separator -->
  <rect x="3" y="699" width="988" height="1" fill="#000"/>
  <rect x="3" y="700" width="988" height="1" fill="#303030"/>
</svg>

<!-- close X -->
<svg width="995" height="725">
  <path d="M13.5 14.5L18 19M18 14.5L13.5 19" stroke="#b4b4b4" stroke-width="0.9" fill="none"/>
  <!-- lock -->
  <rect x="49" y="13" width="8" height="6" fill="#c4c4c4"/>
  <path d="M50.5 13V11.5Q50.5 9.5 52.5 9.3Q54 9.2 55 10" stroke="#c4c4c4" stroke-width="1.3" fill="none"/>
  <rect x="52.5" y="15" width="1.5" height="2.5" fill="#1a1a1a"/>
  <!-- hamburger -->
  <rect x="219" y="13" width="8" height="1.2" fill="#c0c0c0"/>
  <rect x="219" y="16" width="8" height="1.2" fill="#c0c0c0"/>
  <rect x="219" y="19" width="8" height="1.2" fill="#c0c0c0"/>
  <!-- tab chevron -->
  <path d="M120.3 37.4L117.1 41L120.3 44.6" stroke="#2d8ceb" stroke-width="1" fill="none"/>
</svg>

<div class="t g" style="left:66px;top:11px;letter-spacing:0.47px">Composition</div>
<div class="t b" style="left:136px;top:11px">Current Comp</div>
<div class="t b" style="left:31px;top:36px">Current Comp</div>
<div class="t g" style="left:135px;top:36px">Character</div>

<!-- circle layer -->
<svg width="995" height="725">
  <circle cx="488.9" cy="383.1" r="156.5" fill="#2e78a9"/>
  <circle cx="489" cy="383" r="121.5" fill="#f4f5dd"/>
  <circle cx="488.5" cy="383" r="139.4" fill="none" stroke="#e6d84c" stroke-width="1.6"/>
  <g fill="#000020" opacity="0.8">
    <rect x="347" y="242" width="8" height="8"/><rect x="486" y="242" width="8" height="8"/><rect x="626" y="242" width="8" height="8"/>
    <rect x="347" y="381" width="8" height="8"/><rect x="626" y="381" width="8" height="8"/>
    <rect x="347" y="520" width="8" height="8"/><rect x="486" y="520" width="8" height="8"/><rect x="626" y="520" width="8" height="8"/>
  </g>
  <g fill="#e2d54e" stroke="#f2e35a" stroke-width="1">
    <rect x="346.5" y="241.5" width="7" height="7"/><rect x="485.5" y="241.5" width="7" height="7"/><rect x="625.5" y="241.5" width="7" height="7"/>
    <rect x="346.5" y="380.5" width="7" height="7"/><rect x="625.5" y="380.5" width="7" height="7"/>
    <rect x="346.5" y="519.5" width="7" height="7"/><rect x="485.5" y="519.5" width="7" height="7"/><rect x="625.5" y="519.5" width="7" height="7"/>
  </g>
  <!-- anchor -->
  <circle cx="488.7" cy="383.5" r="15" fill="#c41f6a" stroke="#f0dc40" stroke-width="1"/>
  <g transform="translate(490.4,384.4)" fill="#2a0418" opacity="0.55">
    <path d="M0 -9L1 -4.5H-1ZM0 9L1 4.5H-1ZM-9 0L-4.5 1V-1ZM9 0L4.5 1V-1Z"/>
    <circle r="4.3" fill="none" stroke="#2a0418" stroke-width="1.5"/>
  </g>
  <g transform="translate(489.4,383.4)">
    <path fill="#e8d84a" d="M0 -9.2L0.9 -4.5H-0.9ZM0 9.2L0.9 4.5H-0.9ZM-9.2 0L-4.5 0.9V-0.9ZM9.2 0L4.5 0.9V-0.9Z"/>
    <circle r="4.2" fill="#c41f6a" stroke="#ead94a" stroke-width="1.6"/>
    <path d="M-3 1A3.2 3.2 0 0 1 1 -3" stroke="#4a0a28" stroke-width="1.1" fill="none"/>
    <path fill="#e8d84a" d="M0 -1.6L0.5 -0.5L1.6 0L0.5 0.5L0 1.6L-0.5 0.5L-1.6 0L-0.5 -0.5Z"/>
  </g>
</svg>

<!-- toolbar -->
<div class="dd" style="left:47px;width:70px"></div>
<div class="dd" style="left:139px;width:22px;background:#1a1a1a;border-color:#2a2a2a"></div>
<div class="dd" style="left:161px;width:70px"></div>
<div class="dd" style="left:297px;width:88px"></div>
<div class="dd" style="left:428px;width:106px"></div>
<div class="dd" style="left:536px;width:70px"></div>
<div class="dd" style="left:628px;width:22px;background:#1d1d1d;border-color:#202020"></div>

<div class="t g" style="left:54px;top:705px;font-size:12px;line-height:12px">(50%)</div>
<div class="t g" style="left:169px;top:706px;letter-spacing:0.2px">0:00:02:04</div>
<div class="t g" style="left:304px;top:706px;font-size:12px;line-height:12px">(Half)</div>
<div class="t g" style="left:435px;top:707px">Active Camera</div>
<div class="t g" style="left:544px;top:707px">1 View</div>
<div class="t b" style="left:720px;top:706px;font-size:11.5px;line-height:12px">+0.0</div>

<svg width="995" height="725">
  <g stroke="#c4c4c4" fill="none" stroke-width="0.95">
    <path d="M103.7 710.2L107.3 713.6L110.9 710.2"/>
    <path d="M370.8 710.2L374.5 713.6L378.2 710.2"/>
    <path d="M521 710.2L524.6 713.6L528.2 710.2"/>
    <path d="M592.8 710.2L596.5 713.6L600.2 710.2"/>
  </g>
  <!-- icon1 stacked frames -->
  <g fill="none" stroke="#b8b8b8" stroke-width="1">
    <path d="M10 713.5H18.5V708"/>
    <path d="M12 715.5H20.5V710"/>
  </g>
  <rect x="8" y="706" width="9" height="6" fill="#b8b8b8"/>
  <path d="M11 707L14 709L11 711Z" fill="#1e1e1e"/>
  <!-- monitor -->
  <rect x="30.6" y="705.6" width="11" height="7.2" fill="none" stroke="#b8b8b8" stroke-width="1.2"/>
  <path d="M33.5 714h5l1 1h-7z" fill="#b8b8b8"/>
  <rect x="32" y="715" width="8" height="1" fill="#b8b8b8"/>
  <!-- ROI -->
  <rect x="121.5" y="705.5" width="12" height="7" fill="none" stroke="#b8b8b8" stroke-width="1"/>
  <path d="M127.5 704v2.5M127.5 711.5v3M120 709h2.5M132.5 709h2.5" stroke="#b8b8b8" stroke-width="1"/>
  <path d="M127.5 707.8L128.7 709L127.5 710.2L126.3 709Z" fill="#b8b8b8"/>
  <path d="M129.6 716h5l-2.5 2.6z" fill="#b8b8b8"/>
  <!-- mask icon -->
  <g stroke="#2d8ceb" stroke-width="1.1" fill="none"><path d="M143.7 716V711L149 705.8H156V716Z"/></g>
  <g fill="#2d8ceb"><circle cx="143.7" cy="716" r="1.1"/><circle cx="143.7" cy="711" r="1.1"/><circle cx="149" cy="705.8" r="1.1"/><circle cx="156" cy="705.8" r="1.1"/><circle cx="156" cy="716" r="1.1"/><circle cx="156" cy="711" r="0.9"/></g>
  <!-- camera -->
  <path d="M235 707h3.8l0.8-1.8h5.6l0.8 1.8h3v9.6h-14z" fill="#b8b8b8"/>
  <circle cx="242" cy="711.6" r="2.4" fill="#9a9a9a" stroke="#262626" stroke-width="1.2"/>
  <!-- show snapshot (disabled) -->
  <path d="M256.5 712.5Q262.5 706 269 712.5Q262.5 719 256.5 712.5Z" fill="none" stroke="#3e3e3e" stroke-width="1.4"/>
  <circle cx="263" cy="712.6" r="1.8" fill="#3e3e3e"/>
  <path d="M262.5 705.8h2.5l0.7-1.2h2.8l0.7 1.2h2v4h-8.7z" fill="#3e3e3e"/>
  <circle cx="267" cy="707.5" r="1.2" fill="#232323"/>
  <!-- rgb -->
  <circle cx="285.7" cy="706.9" r="3.1" fill="#e01010"/>
  <circle cx="282.6" cy="712" r="3.1" fill="#1fb82a"/>
  <circle cx="288.1" cy="712" r="3.1" fill="#4a78f0"/>
  <path d="M287.4 716h5.5l-2.75 2.8z" fill="#b8b8b8"/>
  <!-- fast previews region -->
  <rect x="388.5" y="705.5" width="13" height="11" fill="none" stroke="#b5b5b5" stroke-width="1.2"/>
  <rect x="392" y="709" width="7" height="5" fill="#c0c0c0"/>
  <!-- transparency grid -->
  <rect x="411" y="707" width="12" height="9" fill="#101010"/>
  <g fill="#7a7a7a">
    <rect x="414" y="707" width="3" height="3"/><rect x="420" y="707" width="3" height="3"/>
    <rect x="411" y="710" width="3" height="3"/><rect x="417" y="710" width="3" height="3"/>
    <rect x="414" y="713" width="3" height="3"/><rect x="420" y="713" width="3" height="3"/>
  </g>
  <rect x="410.5" y="706.5" width="13" height="10" fill="none" stroke="#b8b8b8" stroke-width="1.1"/>
  <!-- pixel aspect -->
  <path d="M611.5 707.5H622.5" stroke="#b8b8b8" stroke-width="1.2" fill="none"/>
  <path d="M609 707.5L612.6 705V710ZM625.2 707.5L621.6 705V710Z" fill="#b8b8b8"/>
  <rect x="613.5" y="711.5" width="7" height="4.8" fill="none" stroke="#b8b8b8" stroke-width="1.1"/>
  <!-- fast preview -->
  <path d="M645.5 712V705.5H632.5V716.3H640.2" stroke="#b8b8b8" stroke-width="1.1" fill="none"/>
  <path d="M640.8 707.3L636.6 711.6H639L637.4 715.2L641.8 710.6H639.4Z" fill="#b0b0b0"/>
  <path d="M641 714h5.2l-2.6 2.8z" fill="#b8b8b8"/>
  <!-- timeline icon -->
  <path d="M659 705h5v2.5l-1.5 1.2h-2l-1.5-1.2z" fill="#b8b8b8"/>
  <rect x="661" y="708" width="1" height="3" fill="#b8b8b8"/>
  <path d="M655.6 706.5V714.5H667.4V706.5M658.6 710V714.5M664.6 710V714.5M661.5 710V714.5" stroke="#b8b8b8" stroke-width="1.1" fill="none"/>
  <!-- flowchart -->
  <g fill="#b8b8b8">
    <rect x="680" y="705" width="5" height="4"/>
    <rect x="676" y="713" width="5" height="4"/>
    <rect x="684" y="713" width="5" height="4"/>
  </g>
  <path d="M682.5 709V711M678.5 713V711.5H686.5V713" stroke="#b8b8b8" stroke-width="1.1" fill="none"/>
  <!-- separator -->
  <rect x="694.6" y="702" width="1" height="18" fill="#363636"/>
  <!-- shutter -->
  <clipPath id="shc"><circle cx="707" cy="711" r="6.1"/></clipPath>
  <circle cx="707" cy="711" r="6.1" fill="#b8b8b8"/>
  <g clip-path="url(#shc)">
    <path d="M709.13 711.57L706.59 717.01M707.57 713.13L701.59 713.65M705.44 712.56L702.00 707.64M704.87 710.43L707.41 704.99M706.43 708.87L712.41 708.35M708.56 709.44L712.00 714.36" stroke="#262626" stroke-width="0.9" fill="none"/>
  </g>
  <path d="M709.13 711.57L707.57 713.13L705.44 712.56L704.87 710.43L706.43 708.87L708.56 709.44Z" fill="#262626"/>
</svg>
</body></html>
